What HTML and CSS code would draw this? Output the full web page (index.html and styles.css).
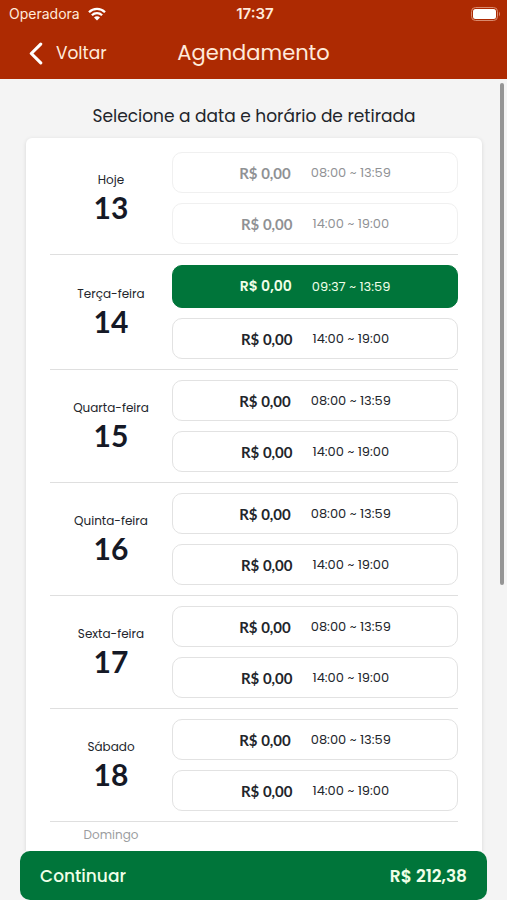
FILE: index.html
```html
<!DOCTYPE html>
<html lang="pt-BR">
<head>
    <meta charset="UTF-8">
    <meta name="viewport" content="width=device-width, initial-scale=1.0">
    <title>Agendamento</title>
    <link rel="stylesheet" href="styles.css">
</head>
<body>

    <header class="header">
        <div class="status">
            <div class="carrier">
                <span>Operadora</span>
                <svg class="wifi" viewBox="0 0 18 14" aria-hidden="true">
                    <path d="M1 5.200a11.300 11.300 0 0 1 16 0" />
                    <path d="M3.900 8.300a7.200 7.200 0 0 1 10.200 0" />
                    <path class="wifi-dot" d="M9 13.500 6 10.400a4.200 4.200 0 0 1 6 0z" />
                </svg>
            </div>
            <span class="clock">17:37</span>
            <svg class="battery" viewBox="0 0 30 14" aria-hidden="true">
                <rect class="battery-case" x="0.5" y="0.5" width="26" height="13" rx="4" />
                <rect class="battery-level" x="2" y="2" width="23" height="10" rx="2.5" />
                <path class="battery-tip" d="M28 4.500q2 2.500 0 5z" />
            </svg>
        </div>
        <nav class="nav">
            <button class="back" type="button">
                <svg viewBox="0 0 14 22" aria-hidden="true"><path d="M12 2 3 11l9 9" /></svg>
                <span>Voltar</span>
            </button>
            <h1>Agendamento</h1>
        </nav>
    </header>

    <main class="content">
        <h2>Selecione a data e horário de retirada</h2>

        <div class="card">
            <section class="day">
                <div class="date"><span>Hoje</span><strong>13</strong></div>
                <div class="slots">
                    <button class="slot" type="button" disabled><b>R$ 0,00</b><span>08:00 ~ 13:59</span></button>
                    <button class="slot" type="button" disabled><b>R$ 0,00</b><span>14:00 ~ 19:00</span></button>
                </div>
            </section>
            <section class="day">
                <div class="date"><span>Terça-feira</span><strong>14</strong></div>
                <div class="slots">
                    <button class="slot selected" type="button" aria-pressed="true"><b>R$ 0,00</b><span>09:37 ~ 13:59</span></button>
                    <button class="slot" type="button"><b>R$ 0,00</b><span>14:00 ~ 19:00</span></button>
                </div>
            </section>
            <section class="day">
                <div class="date"><span>Quarta-feira</span><strong>15</strong></div>
                <div class="slots">
                    <button class="slot" type="button"><b>R$ 0,00</b><span>08:00 ~ 13:59</span></button>
                    <button class="slot" type="button"><b>R$ 0,00</b><span>14:00 ~ 19:00</span></button>
                </div>
            </section>
            <section class="day">
                <div class="date"><span>Quinta-feira</span><strong>16</strong></div>
                <div class="slots">
                    <button class="slot" type="button"><b>R$ 0,00</b><span>08:00 ~ 13:59</span></button>
                    <button class="slot" type="button"><b>R$ 0,00</b><span>14:00 ~ 19:00</span></button>
                </div>
            </section>
            <section class="day">
                <div class="date"><span>Sexta-feira</span><strong>17</strong></div>
                <div class="slots">
                    <button class="slot" type="button"><b>R$ 0,00</b><span>08:00 ~ 13:59</span></button>
                    <button class="slot" type="button"><b>R$ 0,00</b><span>14:00 ~ 19:00</span></button>
                </div>
            </section>
            <section class="day">
                <div class="date"><span>Sábado</span><strong>18</strong></div>
                <div class="slots">
                    <button class="slot" type="button"><b>R$ 0,00</b><span>08:00 ~ 13:59</span></button>
                    <button class="slot" type="button"><b>R$ 0,00</b><span>14:00 ~ 19:00</span></button>
                </div>
            </section>
            <section class="day closed">
                <div class="date"><span>Domingo</span></div>
            </section>
        </div>

        <div class="scroll-thumb"></div>
    </main>

    <button class="continue" type="button">
        <span>Continuar</span>
        <b>R$ 212,38</b>
    </button>

</body>
</html>
```
FILE: styles.css
```css
* {
    box-sizing: border-box;
}

body {
    margin: 0;
    height: 100vh;
    display: flex;
    flex-direction: column;
    overflow: hidden;
    background-color: #f4f4f4;
    color: #22252b;
    font-family: Poppins, Inter, sans-serif;
}

button {
    font-family: inherit;
    color: inherit;
    cursor: pointer;
}

/* header */
.header {
    flex: none;
    background-color: #ad2a02;
    color: #ffeadb;
}

.status {
    display: grid;
    grid-template-columns: 1fr auto 1fr;
    align-items: center;
    height: 27px;
    padding: 0 6px 0 9px;
    font-family: Inter, sans-serif;
    font-size: 14px;
}

.carrier {
    display: flex;
    align-items: center;
    gap: 8px;
}

.wifi {
    width: 18px;
    height: 14px;
    fill: none;
    stroke: #fff;
    stroke-width: 2.3;
}

.wifi-dot {
    fill: #fff;
    stroke: none;
}

.clock {
    font-size: 15px;
    font-weight: 600;
}

.battery {
    justify-self: end;
    width: 30px;
    height: 14px;
}

.battery-case {
    fill: none;
    stroke: #d98a6e;
}

.battery-level {
    fill: #fff;
}

.battery-tip {
    fill: #d98a6e;
}

.nav {
    display: grid;
    grid-template-columns: 1fr auto 1fr;
    align-items: center;
    height: 52px;
    padding: 0 28px;
}

.back {
    justify-self: start;
    display: flex;
    align-items: center;
    gap: 13px;
    padding: 0;
    border: none;
    background: none;
    font-size: 17px;
}

.back svg {
    width: 15px;
    height: 23px;
    fill: none;
    stroke: #fff;
    stroke-width: 3;
    stroke-linecap: round;
    stroke-linejoin: round;
}

h1 {
    margin: 0;
    font-size: 21px;
    line-height: 28px;
    font-weight: 400;
}

/* content */
.content {
    position: relative;
    flex: 1;
    min-height: 0;
    padding: 23px 25px 0 26px;
    overflow: hidden;
}

h2 {
    margin: 0 0 8px;
    font-size: 17px;
    line-height: 28px;
    font-weight: 400;
    text-align: center;
}

.card {
    padding: 4px 24px 50px;
    background-color: #fff;
    border-radius: 6px;
    box-shadow: 0 1px 4px rgba(0, 0, 0, 0.12);
}

.day {
    display: flex;
    align-items: center;
    padding: 10px 0;
    border-bottom: 1px solid #dfdfdf;
}

.day.closed {
    padding: 4px 0;
    border-bottom: none;
    opacity: 0.45;
}

.date {
    width: 122px;
    display: flex;
    flex-direction: column;
    align-items: center;
    font-size: 12px;
    line-height: 18px;
}

.date strong {
    font-family: Lato, sans-serif;
    font-size: 30px;
    line-height: 36px;
    color: #151926;
}

.slots {
    flex: 1;
    display: flex;
    flex-direction: column;
    gap: 10px;
}

.slot {
    display: flex;
    align-items: center;
    justify-content: center;
    gap: 20px;
    height: 41px;
    padding: 0;
    background-color: #fff;
    border: 1px solid #e2e2e2;
    border-radius: 10px;
    font-size: 13px;
}

.slot b {
    font-family: Lato, sans-serif;
    font-size: 15px;
}

.slot:disabled {
    opacity: 0.5;
    cursor: default;
}

.slot.selected {
    height: 43px;
    background-color: #00753a;
    border-color: #00753a;
    color: #f0ffe8;
}

.slot.selected b {
    font-family: inherit;
    font-size: 14px;
    font-weight: 600;
}

.scroll-thumb {
    position: absolute;
    top: 4px;
    right: 3px;
    width: 4px;
    height: 65%;
    background-color: #959595;
    border-radius: 2px;
}

/* bottom bar */
.continue {
    flex: none;
    display: flex;
    align-items: center;
    justify-content: space-between;
    height: 49px;
    margin: 0 20px;
    padding: 0 20px;
    background-color: #00753a;
    border: none;
    border-radius: 10px;
    color: #f0ffe8;
    font-size: 17px;
    font-weight: 500;
}

.continue b {
    font-weight: 600;
}
```
